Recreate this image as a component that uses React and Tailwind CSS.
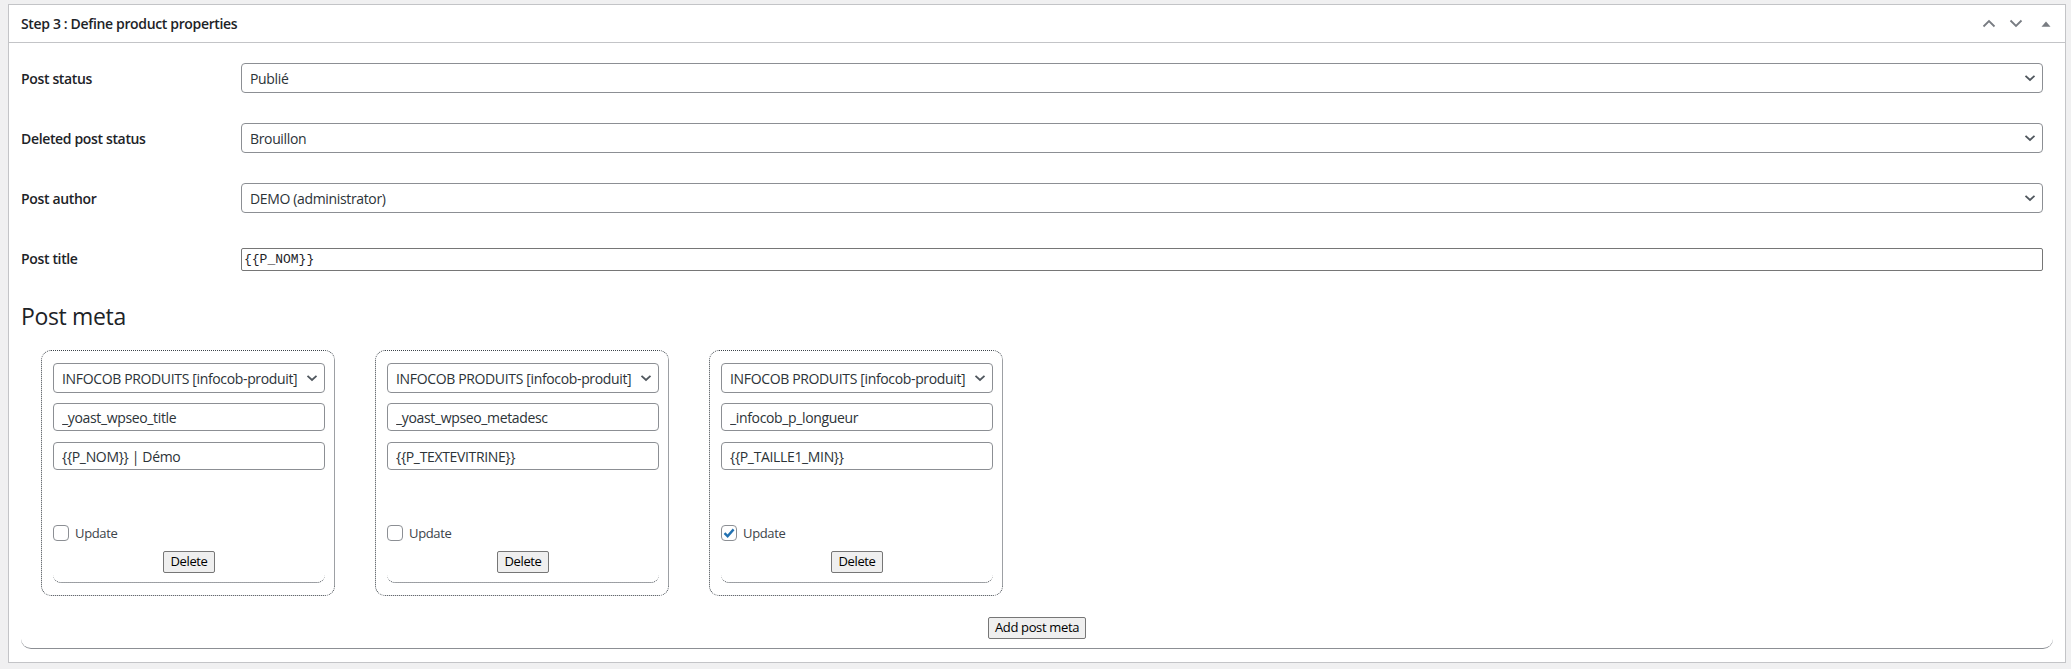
import { useState } from 'react';

const FONT = { fontFamily: '"Open Sans", "Noto Sans", sans-serif' };

function Chevron({ up = false, className = '' }) {
    return (
        <svg width="14" height="9" viewBox="0 0 14 9" className={className}>
            <path
                d={up ? 'M1.5 7.5 L7 2 L12.5 7.5' : 'M1.5 1.5 L7 7 L12.5 1.5'}
                fill="none"
                stroke="currentColor"
                strokeWidth="1.8"
            />
        </svg>
    );
}

function SelectBox({ value, className = '' }) {
    return (
        <div className={`relative ${className}`}>
            <select
                defaultValue={value}
                className="w-full h-full appearance-none bg-white border border-[#8c8f94] rounded-[4px] pl-[8px] pr-[22px] text-[14px] tracking-[-0.35px] text-[#2c3338] outline-none"
                style={FONT}
            >
                <option>{value}</option>
            </select>
            <svg
                width="12"
                height="8"
                viewBox="0 0 12 8"
                className="absolute right-[7px] top-1/2 -translate-y-1/2 text-[#50575e] pointer-events-none"
            >
                <path d="M1.5 1.8 L6 6 L10.5 1.8" fill="none" stroke="currentColor" strokeWidth="1.8" />
            </svg>
        </div>
    );
}

function FormRow({ label, children }) {
    return (
        <div className="h-[60px] flex items-center">
            <div className="w-[210px] shrink-0 text-[14px] font-semibold text-[#1d2327]">{label}</div>
            <div className="flex-1 px-[10px]">{children}</div>
        </div>
    );
}

function MetaCard({ meta }) {
    const [checked, setChecked] = useState(meta.update);

    return (
        <div className="w-[294px] mx-[20px] border border-dotted border-[#3c434a] rounded-[10px] pt-[12px] pl-[11px] pr-[9px] pb-[12px]">
            <div className="border-b border-dotted border-[#3c434a] rounded-b-[8px] pb-[9px] flex flex-col">
                <SelectBox value="INFOCOB PRODUITS [infocob-produit]" className="h-[30px]" />
                <input
                    defaultValue={meta.key}
                    className="mt-[10px] h-[28px] border border-[#8c8f94] rounded-[4px] px-[8px] text-[14px] tracking-[-0.35px] text-[#2c3338] outline-none"
                    style={FONT}
                />
                <input
                    defaultValue={meta.value}
                    className="mt-[11px] h-[28px] border border-[#8c8f94] rounded-[4px] px-[8px] text-[14px] tracking-[-0.35px] text-[#2c3338] outline-none"
                    style={FONT}
                />

                <label
                    className="mt-[55px] h-[16px] flex items-center gap-[6px] text-[13px] leading-[16px] text-[#3c434a] cursor-pointer"
                    onClick={() => setChecked(!checked)}
                >
                    <span className="w-[16px] h-[16px] border border-[#8c8f94] rounded-[4px] bg-white flex items-center justify-center">
                        {checked && (
                            <svg width="14" height="14" viewBox="0 0 14 14">
                                <path d="M2.5 7.2 L5.6 10.2 L11.6 3.4" fill="none" stroke="#2271b1" strokeWidth="2.4" />
                            </svg>
                        )}
                    </span>
                    Update
                </label>

                <div className="mt-[10px] flex justify-center">
                    <button className="h-[22px] w-[52px] bg-[#efefef] border border-[#767676] rounded-[2px] text-[13px] text-black">
                        Delete
                    </button>
                </div>
            </div>
        </div>
    );
}

export default function App() {
    const metas = [
        { key: '_yoast_wpseo_title', value: '{{P_NOM}} | Démo', update: false },
        { key: '_yoast_wpseo_metadesc', value: '{{P_TEXTEVITRINE}}', update: false },
        { key: '_infocob_p_longueur', value: '{{P_TAILLE1_MIN}}', update: true },
    ];

    return (
        <div className="min-h-[669px] bg-[#f0f0f1] pt-[4px] pl-[8px] pr-[5px] tracking-[-0.35px]" style={FONT}>
            <div className="bg-white border border-[#c3c4c7]">
                {/* Header */}
                <div className="h-[38px] border-b border-[#c3c4c7] flex items-center justify-between pl-[12px] pr-[14px]">
                    <h2 className="text-[14px] font-semibold text-[#1d2327]">Step 3 : Define product properties</h2>
                    <div className="flex items-center text-[#787c82]">
                        <Chevron up className="mr-[13px]" />
                        <Chevron className="mr-[18px]" />
                        <svg width="10" height="6" viewBox="0 0 10 6">
                            <path d="M0.5 5.8 L5 0.5 L9.5 5.8 Z" fill="currentColor" />
                        </svg>
                    </div>
                </div>

                {/* Body */}
                <div className="px-[12px] pb-[13px]">
                    <div className="border-b border-[#8c8f94] rounded-b-[10px] pt-[5px] pb-[9px]">
                        <FormRow label="Post status">
                            <SelectBox value="Publié" className="h-[30px]" />
                        </FormRow>
                        <FormRow label="Deleted post status">
                            <SelectBox value="Brouillon" className="h-[30px]" />
                        </FormRow>
                        <FormRow label="Post author">
                            <SelectBox value="DEMO (administrator)" className="h-[30px]" />
                        </FormRow>
                        <FormRow label="Post title">
                            <input
                                defaultValue="{{P_NOM}}"
                                className="w-full h-[23px] border border-[#767676] rounded-[2px] px-[2px] text-[13px] tracking-normal text-[#1d2327] outline-none"
                                style={{ fontFamily: '"Liberation Mono", "DejaVu Sans Mono", monospace' }}
                            />
                        </FormRow>

                        <h2 className="mt-[14px] h-[29px] text-[23px] leading-[29px] font-normal text-[#1d2327]">Post meta</h2>

                        <div className="mt-[19px] flex">
                            {metas.map((meta) => (
                                <MetaCard key={meta.key} meta={meta} />
                            ))}
                        </div>

                        <div className="mt-[21px] flex justify-center">
                            <button className="h-[22px] px-[6px] bg-[#efefef] border border-[#767676] rounded-[2px] text-[13px] text-black">
                                Add post meta
                            </button>
                        </div>
                    </div>
                </div>
            </div>
        </div>
    );
}
